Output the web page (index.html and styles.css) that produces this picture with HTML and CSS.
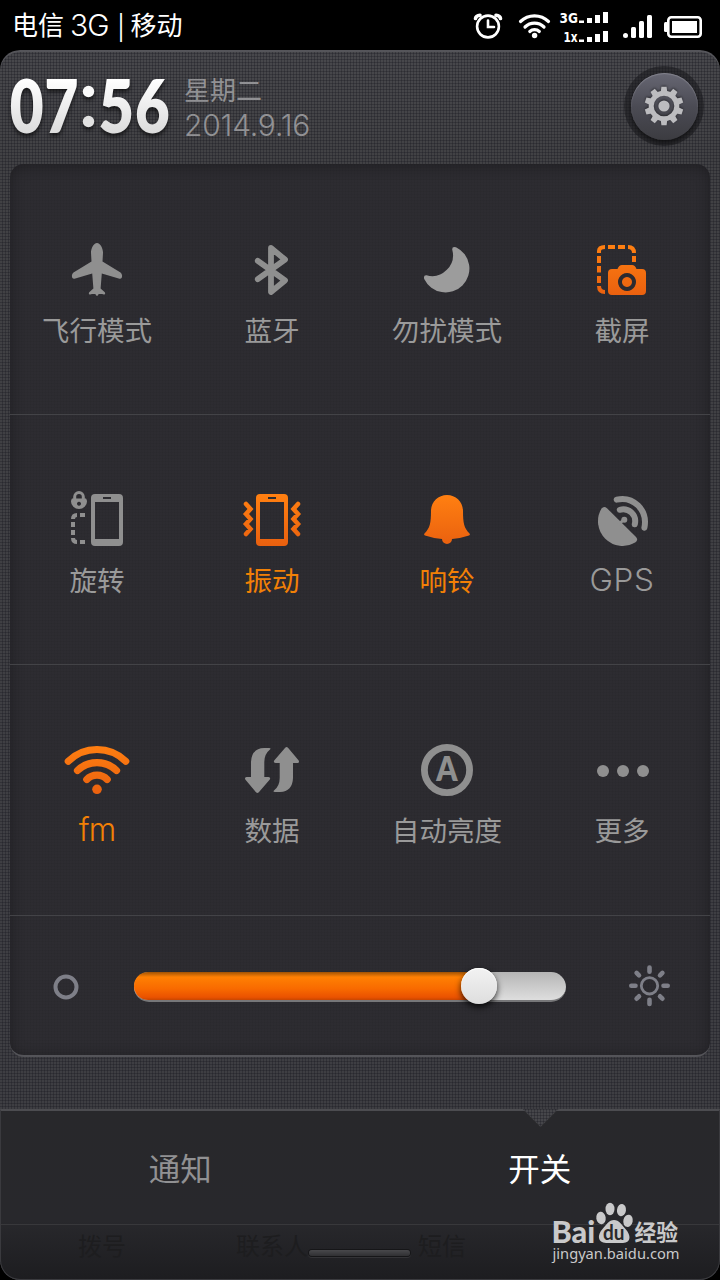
FILE: index.html
```html
<!DOCTYPE html>
<html lang="zh-CN">
<head>
<meta charset="utf-8">
<title>开关</title>
<link rel="stylesheet" href="styles.css">
</head>
<body>
<svg class="defs" width="0" height="0">
  <defs>
    <linearGradient id="orange" gradientUnits="userSpaceOnUse" x1="0" y1="246" x2="0" y2="296"><stop offset="0" stop-color="#ff7f11"/><stop offset="1" stop-color="#e9600f"/></linearGradient>
    <linearGradient id="orange2" gradientUnits="userSpaceOnUse" x1="0" y1="496" x2="0" y2="546"><stop offset="0" stop-color="#ff7f11"/><stop offset="1" stop-color="#e9600f"/></linearGradient>
    <linearGradient id="orange3" gradientUnits="userSpaceOnUse" x1="0" y1="745" x2="0" y2="795"><stop offset="0" stop-color="#ff7f11"/><stop offset="1" stop-color="#e9600f"/></linearGradient>
    <linearGradient id="silver" gradientUnits="userSpaceOnUse" x1="0" y1="-53" x2="0" y2="0"><stop offset="0" stop-color="#fff"/><stop offset="1" stop-color="#dcdcdc"/></linearGradient>
  </defs>
</svg>
<div class="screen">
  <header class="status">
    <span class="carrier"><span>电信</span><span class="latin">3G</span><span class="bar">|</span><span>移动</span></span>
    <svg class="status-icons" width="240" height="50" viewBox="470 0 240 50">
      <g fill="none" stroke="#fff" stroke-width="2.6" stroke-linecap="round">
        <circle cx="488" cy="26.5" r="10.9"/>
        <path d="M488 20.5V27H494"/>
        <path d="M475.5 18.5Q476 15.5 480 15.2M500.5 18.5Q500 15.5 496 15.2" stroke-width="3.6"/>
        <path d="M520.5 21.5A20 20 0 0 1 548.5 21.5M525 27A13.5 13.5 0 0 1 544 27M529.8 31.5A7 7 0 0 1 539.3 31.5" stroke-width="3.2"/>
      </g>
      <g fill="#fff">
        <circle cx="534.6" cy="35.5" r="2.7"/>
        <text class="tiny" transform="translate(559.5 22.8) scale(.9 1)">3G</text>
        <text class="tiny" transform="translate(563.5 41.8) scale(.78 1)">1x</text>
        <path d="M579 20.5h5v2.5h-5zM587 18h5v5h-5zM595 15h5v8h-5zM603 12h5v11h-5z"/>
        <path d="M579 39.5h5v2.5h-5zM587 37h5v5h-5zM595 34h5v8h-5zM603 31h5v11h-5z"/>
        <circle cx="625.5" cy="35.5" r="2.5"/>
        <rect x="631" y="27" width="5" height="11" rx="1.5"/><rect x="639" y="21" width="5" height="17" rx="1.5"/><rect x="647" y="15" width="5" height="23" rx="1.5"/>
        <rect x="664" y="22" width="4" height="10" rx="1.5"/>
        <rect x="672" y="21" width="25" height="12"/>
      </g>
      <rect x="668.3" y="17.3" width="32.4" height="19.4" rx="3" fill="none" stroke="#fff" stroke-width="2.6"/>
    </svg>
  </header>

  <main class="panel">
    <section class="head">
      <svg class="clock" width="170" height="110" viewBox="5 52 170 110">
        <g fill="url(#silver)">
          <text class="digit" transform="translate(9.8 132.5) scale(.8 1)">0</text>
          <text class="digit" transform="translate(44.5 132.5) scale(.8 1)">7</text>
          <circle cx="88.5" cy="91.5" r="5.7" fill="#fafafa"/>
          <circle cx="88.5" cy="121.5" r="5.7" fill="#e2e2e2"/>
          <text class="digit" transform="translate(98.5 132.5) scale(.84 1)">5</text>
          <text class="digit" transform="translate(135 132.5) scale(.82 1)">6</text>
        </g>
      </svg>
      <div class="date"><span>星期二</span><span class="num">2014.9.16</span></div>
      <div class="gear-well"><div class="gear">
        <svg width="44" height="44" viewBox="-22 -22 44 44">
          <g class="teeth">
            <path id="t" d="M-2.6 -19.3h5.2l.8 6.3h-6.8z"/>
            <use href="#t" transform="rotate(36)"/><use href="#t" transform="rotate(72)"/><use href="#t" transform="rotate(108)"/><use href="#t" transform="rotate(144)"/><use href="#t" transform="rotate(180)"/><use href="#t" transform="rotate(216)"/><use href="#t" transform="rotate(252)"/><use href="#t" transform="rotate(288)"/><use href="#t" transform="rotate(324)"/>
            <circle r="5.6"/>
            <circle r="12.8" fill="none" stroke="#bcbcbf" stroke-width="5"/>
          </g>
        </svg>
      </div></div>
    </section>

    <section class="card">
      <div class="row">
        <div class="cell"><svg viewBox="57 238 81 64"><path d="M97 243C100.5 243 103.2 249 103 253L102.5 261.5L120.5 272.5C123 274.5 122.5 279.5 119.5 278.8L101.8 273.5L100.6 288.5L104.8 292.3C106 294.5 104 295 102 294L98.8 294L97 296.2L95.2 294L92 294C90 295 88 294.5 89.2 292.3L93.4 288.5L92.2 273.5L74.5 278.8C71.5 279.5 71 274.5 73.5 272.5L91.5 261.5L91 253C90.8 249 93.5 243 97 243Z"/></svg><span>飞行模式</span></div>
        <div class="cell"><svg viewBox="232 238 81 64"><path class="line" stroke-width="5.8" d="M257.8 260.8L285 280.4L271 292V248L285 259.6L257.8 279.2"/></svg><span>蓝牙</span></div>
        <div class="cell"><svg class="lighter" viewBox="407 238 81 64"><path d="M452.2 249.5Q452 246 456 247.2A23.8 23.8 0 1 1 424.2 279Q423.2 275 426.5 275.3A21 21 0 0 0 452.2 249.5Z"/></svg><span>勿扰模式</span></div>
        <div class="cell"><svg viewBox="582 238 81 64"><path fill="none" stroke="url(#orange)" stroke-width="4" d="M599 253V251Q599 247 605 247M608 247H615M618 247H625M628 247Q634 247 634 253M599 256V263M599 266V272.5M599 276V283M599 286Q599 292 605 292M634 256V262"/><path fill="url(#orange)" fill-rule="evenodd" d="M612 269H617.5Q619 265 622 265H632Q635 265 636.5 269H642Q646 269 646 273V291Q646 295 642 295H612Q608 295 608 291V273Q608 269 612 269ZM627 273a9 9 0 1 0 .01 0zM627 277a5 5 0 1 1-.01 0z"/></svg><span>截屏</span></div>
      </div>
      <div class="row">
        <div class="cell"><svg viewBox="57 488 81 64"><path fill-rule="evenodd" d="M95 494H119Q123 494 123 498V542Q123 546 119 546H95Q91 546 91 542V498Q91 494 95 494ZM95 502V539H119V502ZM103 497V499H111V497Z"/><path class="line flat" stroke-width="3" d="M74.7 500V496.8A4.3 4.3 0 0 1 83.3 496.8V500"/><path fill-rule="evenodd" d="M72 498.6H86Q87 500 87 501.5A8 7.5 0 0 1 71 501.5Q71 500 72 498.6ZM79 501.8a2 2 0 1 0 .01 0z"/><path class="line flat" stroke-width="4" d="M73 519Q73 515 77 515M80 515H85M73 522V527M73 530V535M73 538Q73 542 77 542M80 542H85"/></svg><span>旋转</span></div>
        <div class="cell on"><svg viewBox="232 488 81 64"><path fill="url(#orange2)" fill-rule="evenodd" d="M260 494H284Q288 494 288 498V542Q288 546 284 546H260Q256 546 256 542V498Q256 494 260 494ZM260 502V539H284V502ZM268 497V499H276V497Z"/><path fill="none" stroke="url(#orange2)" stroke-width="4.5" stroke-linecap="round" d="M246 504L250.5 509L246 514L250.5 519L246 524L250.5 529L246 534M298 504L293.5 509L298 514L293.5 519L298 524L293.5 529L298 534"/></svg><span>振动</span></div>
        <div class="cell on"><svg viewBox="407 488 81 64"><path fill="url(#orange2)" d="M447 495C456 495 463 502 463 511C463 523 464 528 469.5 533.5Q470.5 535 469 535.5Q460 538.5 452 539A5 5 0 0 1 442 539Q434 538.5 425 535.5Q423.5 535 424.5 533.5C430 528 431 523 431 511C431 502 438 495 447 495Z"/></svg><span>响铃</span></div>
        <div class="cell"><svg viewBox="582 488 81 64"><path d="M601.500 508.500Q604 505.500 607 508.300L636 537Q638.500 540 635.500 542.300A24.700 24.700 0 0 1 601.500 508.500Z"/><circle cx="624.3" cy="519.7" r="3"/><path class="line" stroke-width="3" d="M619 524L624 519.5"/><path class="line" stroke-width="6" d="M619.8 509.8C629 507.5 637 515 634.8 524.3M616.7 499.6C633 496 648 509.5 644.4 527.7"/></svg><span class="gps">GPS</span></div>
      </div>
      <div class="row last">
        <div class="cell on"><svg viewBox="57 738 81 64"><path fill="none" stroke="url(#orange3)" stroke-width="7.2" stroke-linecap="round" d="M68.3 761.2A41 41 0 0 1 125.7 761.2M77.5 770.5A28 28 0 0 1 116.5 770.5M86.8 779.5A14 14 0 0 1 107.2 779.5"/><circle cx="97" cy="789.3" r="4.8" fill="url(#orange3)"/></svg><span class="fm">fm</span></div>
        <div class="cell"><svg viewBox="232 738 81 64"><path id="arrow" d="M251 777V762Q251.5 748.5 264 748H269Q271.5 748.2 270 749.5Q264.3 754 264.3 762V777H268.5Q271 777.3 269.8 779.5L258.8 792.3Q257.4 793.8 256 792.3L245.3 779.5Q244.3 777.3 246.5 777Z"/><use href="#arrow" transform="rotate(180 272 770)"/></svg><span>数据</span></div>
        <div class="cell"><svg viewBox="407 738 81 64"><circle class="line" cx="447" cy="770" r="22.6" stroke-width="6.8"/><text class="auto" transform="translate(447 780.500) scale(.88 1)" text-anchor="middle">A</text></svg><span>自动亮度</span></div>
        <div class="cell"><svg viewBox="582 738 81 64"><circle cx="603" cy="771" r="6"/><circle cx="623" cy="771" r="6"/><circle cx="643" cy="771" r="6"/></svg><span>更多</span></div>
      </div>
      <div class="brightness">
        <svg width="28" height="28" viewBox="-14 -14 28 28"><circle r="10.5" fill="none" stroke="#7e7f88" stroke-width="4"/></svg>
        <div class="track"><div class="fill"></div><div class="thumb"></div></div>
        <svg width="44" height="44" viewBox="-22.500 -20.800 44 44"><g fill="none" stroke="#7e7f88" stroke-linecap="round"><circle r="8.2" stroke-width="2.8"/><path stroke-width="4.6" d="M0-18.2V-14M0 18.2V14M-18.2 0H-14M18.2 0H14M-12.9-12.9L-10.5-10.5M12.9-12.9L10.5-10.5M-12.9 12.9L-10.5 10.5M12.9 12.9L10.5 10.5"/></g></svg>
      </div>
    </section>

    <footer class="foot">
      <nav class="tabs">
        <div class="tab">通知</div>
        <div class="tab active">开关<i class="notch"></i></div>
      </nav>
      <div class="dock"><span>拨号</span><span>联系人</span><span>短信</span><i class="handle"></i></div>
      <svg class="mark" width="140" height="70" viewBox="545 1198 140 70">
        <g fill="#c9c9ca">
          <text class="brand" transform="translate(551.500 1242.500) scale(1.020 1)">Bai</text>
          <ellipse cx="601" cy="1218" rx="4.7" ry="6.2" transform="rotate(-8 601 1218)"/><ellipse cx="610" cy="1209" rx="4.5" ry="6.2"/><ellipse cx="621.5" cy="1210" rx="4.5" ry="6.2" transform="rotate(8 621 1210)"/><ellipse cx="628" cy="1220.8" rx="4.7" ry="6.2" transform="rotate(12 628 1221)"/>
          <path d="M614 1220C619 1220 622 1225 625.5 1229C631 1235 631.5 1242.5 623 1243H606C597.5 1242.5 597 1235 602.5 1229C606 1225 609 1220 614 1220Z"/>
          <text class="cn" transform="translate(634.5 1240.5) scale(.95 1)">经验</text>
          <text class="url" x="552.5" y="1259" textLength="127" lengthAdjust="spacingAndGlyphs">jingyan.baidu.com</text>
        </g>
        <text class="du" transform="translate(603 1239.5) scale(.95 1)">du</text>
      </svg>
    </footer>
  </main>
</div>
</body>
</html>
```
FILE: styles.css
```css
* { box-sizing: border-box; }
body {
  margin: 0;
  background: #000;
  font-family: "Liberation Sans", "Noto Sans CJK SC", sans-serif;
}
.defs { position: absolute; }
.screen { width: 720px; height: 1280px; display: flex; flex-direction: column; overflow: hidden; }

.status { height: 50px; padding: 0 10px 0 12px; display: flex; justify-content: space-between; align-items: center; color: #fff; }
.carrier { display: flex; font-family: "Noto Sans CJK SC", sans-serif; font-size: 26px; line-height: 48px; height: 50px; }
.latin { font-family: Inter, "Liberation Sans", sans-serif; font-weight: 300; font-size: 30px; letter-spacing: -1px; line-height: 50px; margin-left: 6px; }
.bar { margin: 0 6px 0 9px; }
.tiny { font: bold 13.5px "DejaVu Sans", sans-serif; }

.panel {
  flex: 1;
  display: flex;
  flex-direction: column;
  border-radius: 20px;
  overflow: hidden;
  box-shadow: inset 0 2px 0 #55555a;
  background:
    repeating-linear-gradient(0deg, transparent 0 2px, rgba(20, 20, 28, .3) 2px 3px),
    repeating-linear-gradient(90deg, transparent 0 2px, rgba(20, 20, 28, .3) 2px 3px),
    linear-gradient(#48484c, #414144 110px, #3e3e43 900px, #3e3e42);
}

.head { height: 114px; display: flex; padding: 0 16px 0 5px; }
.clock { margin-top: 2px; filter: drop-shadow(0 3px 2px rgba(0, 0, 0, .6)); }
.digit { font: 800 73px Lato, sans-serif; }
.date { flex: 1; margin-left: 9px; padding-top: 23px; display: flex; flex-direction: column; color: #919194; }
.date span { font-size: 26px; line-height: 36px; }
.date .num { font-family: Inter, sans-serif; font-weight: 300; font-size: 30px; line-height: 32px; letter-spacing: -.2px; }
.gear-well { width: 80px; height: 80px; margin-top: 16px; border-radius: 50%; background: rgba(24, 24, 28, .55); display: flex; align-items: center; justify-content: center; }
.gear { width: 67px; height: 67px; border-radius: 50%; display: flex; align-items: center; justify-content: center; background: linear-gradient(#676773, #4b4b54 50%, #3c3c41); box-shadow: inset 0 1px 1px #82828c, 0 3px 4px rgba(0, 0, 0, .5); }
.teeth { fill: #bcbcbf; filter: drop-shadow(0 -1px 1px rgba(0, 0, 0, .45)); }

.card {
  height: 893px;
  margin: 0 10px;
  border-radius: 14px;
  border-bottom: 2px solid #545459;
  background:
    repeating-linear-gradient(0deg, transparent 0 2px, rgba(0, 0, 0, .035) 2px 3px),
    repeating-linear-gradient(90deg, transparent 0 2px, rgba(0, 0, 0, .035) 2px 3px),
    #2d2c31;
  box-shadow: inset 0 2px 14px rgba(0, 0, 0, .3);
}
.row { height: 251px; margin-bottom: -1px; display: grid; grid-template-columns: repeat(4, 175px); border-bottom: 1px solid #434347; }
.row.last { height: 252px; }
.cell { padding-top: 74px; display: flex; flex-direction: column; align-items: center; gap: 7px; color: #9a9a9a; }
.cell svg { width: 81px; height: 64px; fill: #8f8f8f; stroke: none; overflow: visible; }
.cell svg.lighter { fill: #9c9c9c; }
.line { fill: none; stroke: #8f8f8f; stroke-linecap: round; stroke-linejoin: round; }
.line.flat { stroke-linecap: butt; }
.cell span { height: 40px; line-height: 40px; font-size: 27.6px; margin-right: 1px; font-family: "Noto Sans CJK SC", sans-serif; }
.cell span.gps, .cell span.fm { font-family: Inter, sans-serif; font-weight: 300; font-size: 31.5px; line-height: 42px; }
.cell span.gps { letter-spacing: .6px; }
.cell span.fm { letter-spacing: -1px; }
.cell.on { color: #f28006; }
.auto { font: 800 34px Lato, sans-serif; }

.brightness { height: 144px; padding: 0 39px 0 42px; display: flex; align-items: center; justify-content: space-between; }
.track { position: relative; width: 432px; height: 30px; margin-right: 7px; border-radius: 15px; background: linear-gradient(#b5b5b5, #dedede); border-bottom: 2px solid #777779; }
.fill { width: 345px; height: 28px; border-radius: 14px 0 0 14px; background: linear-gradient(#9f5204, #ff8003 18%, #f86a00 60%, #ea5200 90%, #c94600); }
.thumb { position: absolute; left: 327px; top: -4px; width: 36px; height: 36px; border-radius: 50%; background: linear-gradient(#f2f2f2, #dedede); box-shadow: inset 0 1px 1px #fff, 0 3px 6px rgba(0, 0, 0, .8); }

.foot { position: relative; margin-top: 52px; flex: 1; border: 1px solid #3a3a3e; border-top: 2px solid #4c4c50; border-radius: 0 0 20px 20px; background: linear-gradient(#28282b, #28282c 110px, #1d1d20); }
.tabs { height: 114px; display: flex; border-bottom: 1px solid #38383b; }
.tab { flex: 1; text-align: center; padding: 33px 1px 0 0; font: 31.5px/46px "Noto Sans CJK SC", sans-serif; color: #919193; position: relative; }
.tab.active { color: #fff; padding-right: 0; }
.notch {
  position: absolute; top: -2px; left: 162px; width: 36px; height: 18px;
  clip-path: polygon(0 0, 100% 0, 50% 100%);
  background:
    repeating-linear-gradient(0deg, transparent 0 2px, rgba(20, 20, 28, .3) 2px 3px),
    repeating-linear-gradient(90deg, transparent 0 2px, rgba(20, 20, 28, .3) 2px 3px),
    #46464a;
}
.dock { display: grid; grid-template-columns: 170px 170px 170px; padding: 2px 0 0 16px; text-align: center; font: 24px/36px "Noto Sans CJK SC", sans-serif; color: #1d1d1f; }
.handle { position: absolute; left: 308px; bottom: 23px; width: 101px; height: 6px; border-radius: 3px; background: linear-gradient(#48484b, #303033); box-shadow: 0 0 0 1px #161618, 0 1px 0 1px #333336; }
.mark { position: absolute; left: 544px; top: 87px; }
.brand { font: 900 30px Lato, sans-serif; }
.cn { font: bold 23px "Noto Sans CJK SC", sans-serif; }
.url { font: 15px "Noto Sans", sans-serif; }
.du { font: bold 20px Lato, sans-serif; fill: #29292b; }
```
